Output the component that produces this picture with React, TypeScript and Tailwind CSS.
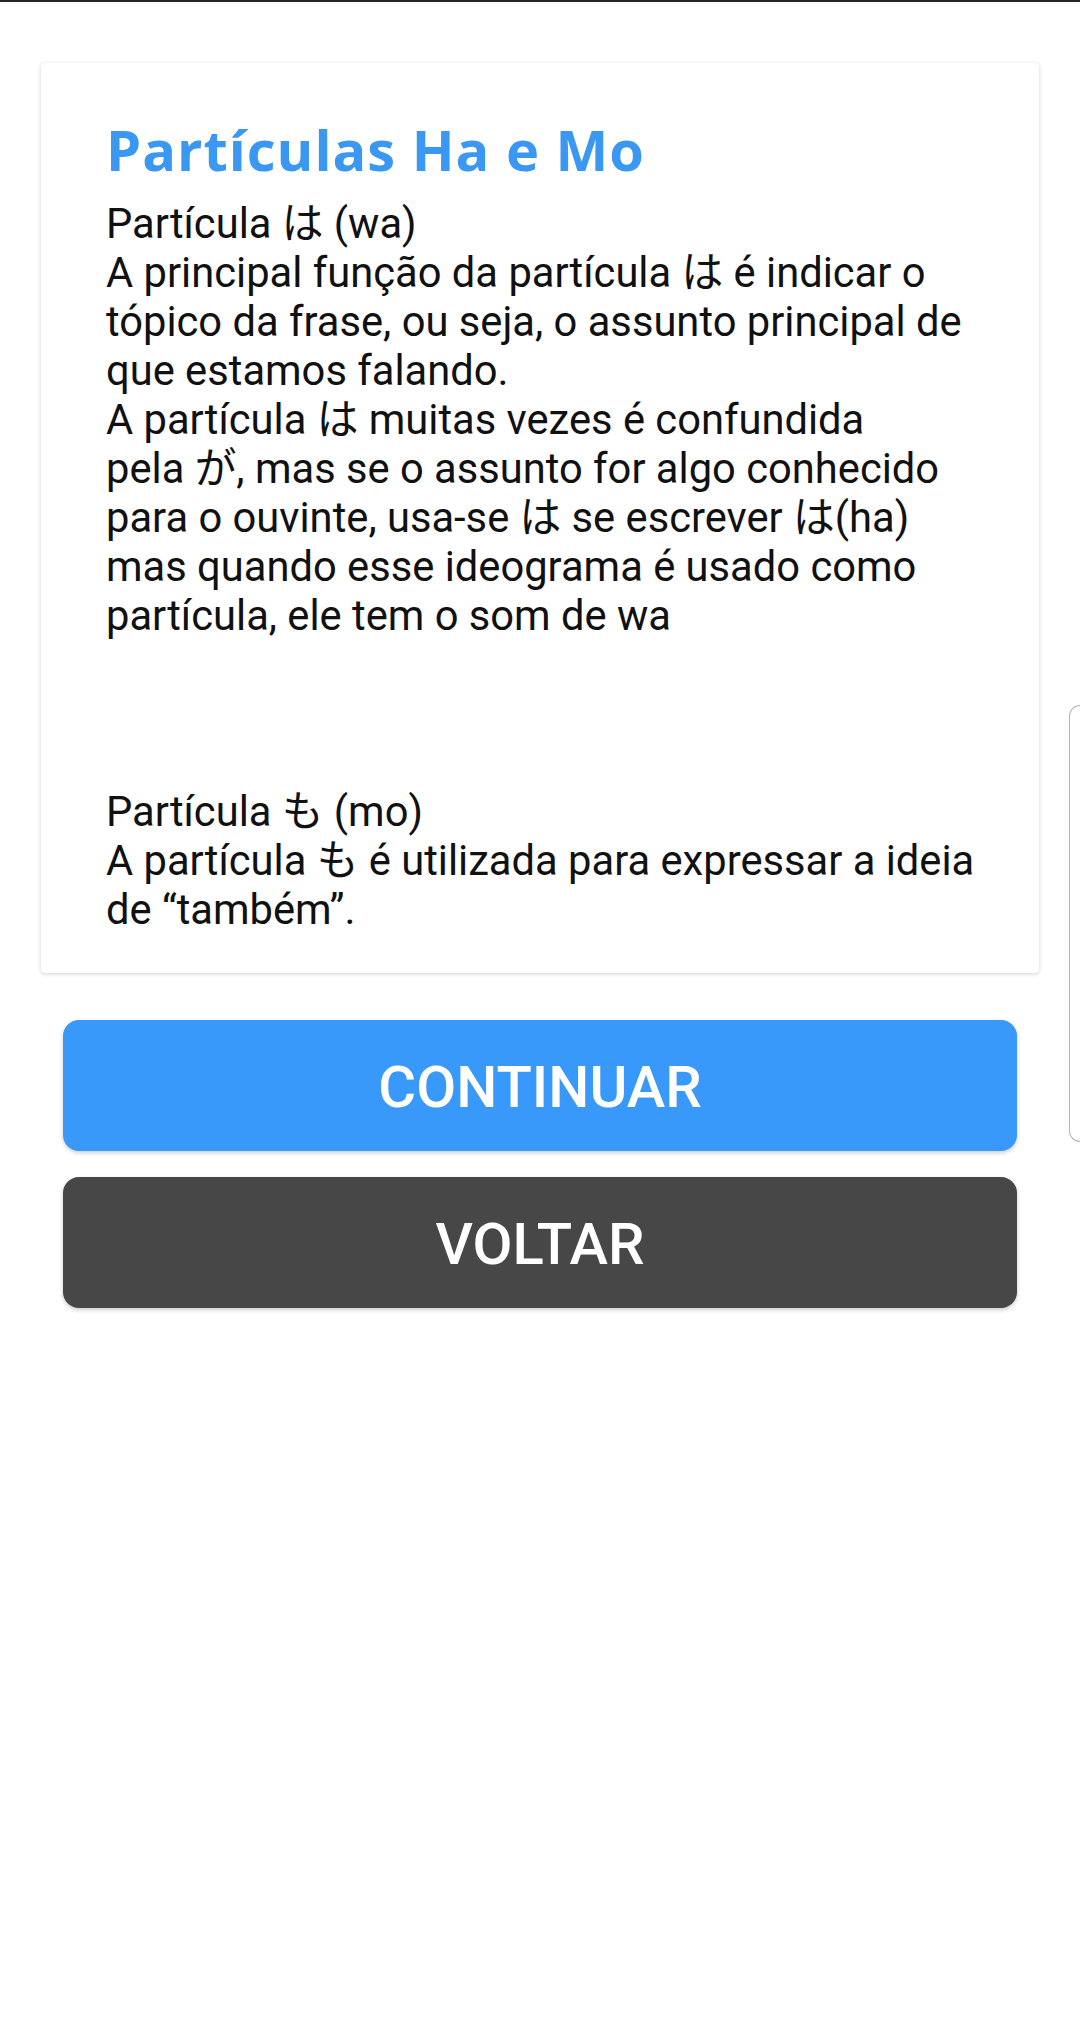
import React from "react";

const body = `Roboto, "Noto Sans CJK JP", sans-serif`;

const lines1 = [
  "Partícula は (wa)",
  "A principal função da partícula は é indicar o",
  "tópico da frase, ou seja, o assunto principal de",
  "que estamos falando.",
  "A partícula は muitas vezes é confundida",
  "pela が, mas se o assunto for algo conhecido",
  "para o ouvinte, usa-se は se escrever は(ha)",
  "mas quando esse ideograma é usado como",
  "partícula, ele tem o som de wa",
];

const lines2 = [
  "Partícula も (mo)",
  "A partícula も é utilizada para expressar a ideia",
  "de “também”.",
];

export default function App() {
  return (
    <div className="relative w-[1080px] min-h-[2032px] bg-white">
      <div className="h-[2px] bg-[#262626]" />
      <div className="px-[41px] pt-[61px]">
        <div className="rounded-[4px] bg-white pl-[65px] pr-[30px] pt-[58px] pb-[39px] shadow-[0_1px_4px_rgba(0,0,0,0.18)]">
          <div
            className="text-[56px] font-bold leading-[56px] text-[#3A98F2] tracking-[1px]"
            style={{ fontFamily: `"Open Sans", sans-serif` }}
          >
            Partículas Ha e Mo
          </div>
          <div
            className="mt-[22px] text-[41.7px] leading-[49px] text-[#111] whitespace-nowrap"
            style={{ fontFamily: body }}
          >
            {lines1.map((l, i) => (
              <div key={i}>{l}</div>
            ))}
            <div className="h-[147px]" />
            {lines2.map((l, i) => (
              <div key={i}>{l}</div>
            ))}
          </div>
        </div>
      </div>
      <div className="mt-[47px] flex flex-col gap-[26px] px-[63px]">
        <button
          className="flex h-[131px] items-center justify-center rounded-[16px] bg-[#3899FA] pt-[3px] text-[58px] font-medium text-white shadow-[0_2px_4px_rgba(0,0,0,0.2)]"
          style={{ fontFamily: body }}
        >
          CONTINUAR
        </button>
        <button
          className="flex h-[131px] items-center justify-center rounded-[16px] bg-[#474747] pt-[3px] text-[58px] font-medium text-white shadow-[0_2px_4px_rgba(0,0,0,0.2)]"
          style={{ fontFamily: body }}
        >
          VOLTAR
        </button>
      </div>
      <div className="absolute right-0 top-[705px] h-[437px] w-[11px] rounded-l-[12px] border border-r-0 border-[#b5b5b5]" />
    </div>
  );
}
